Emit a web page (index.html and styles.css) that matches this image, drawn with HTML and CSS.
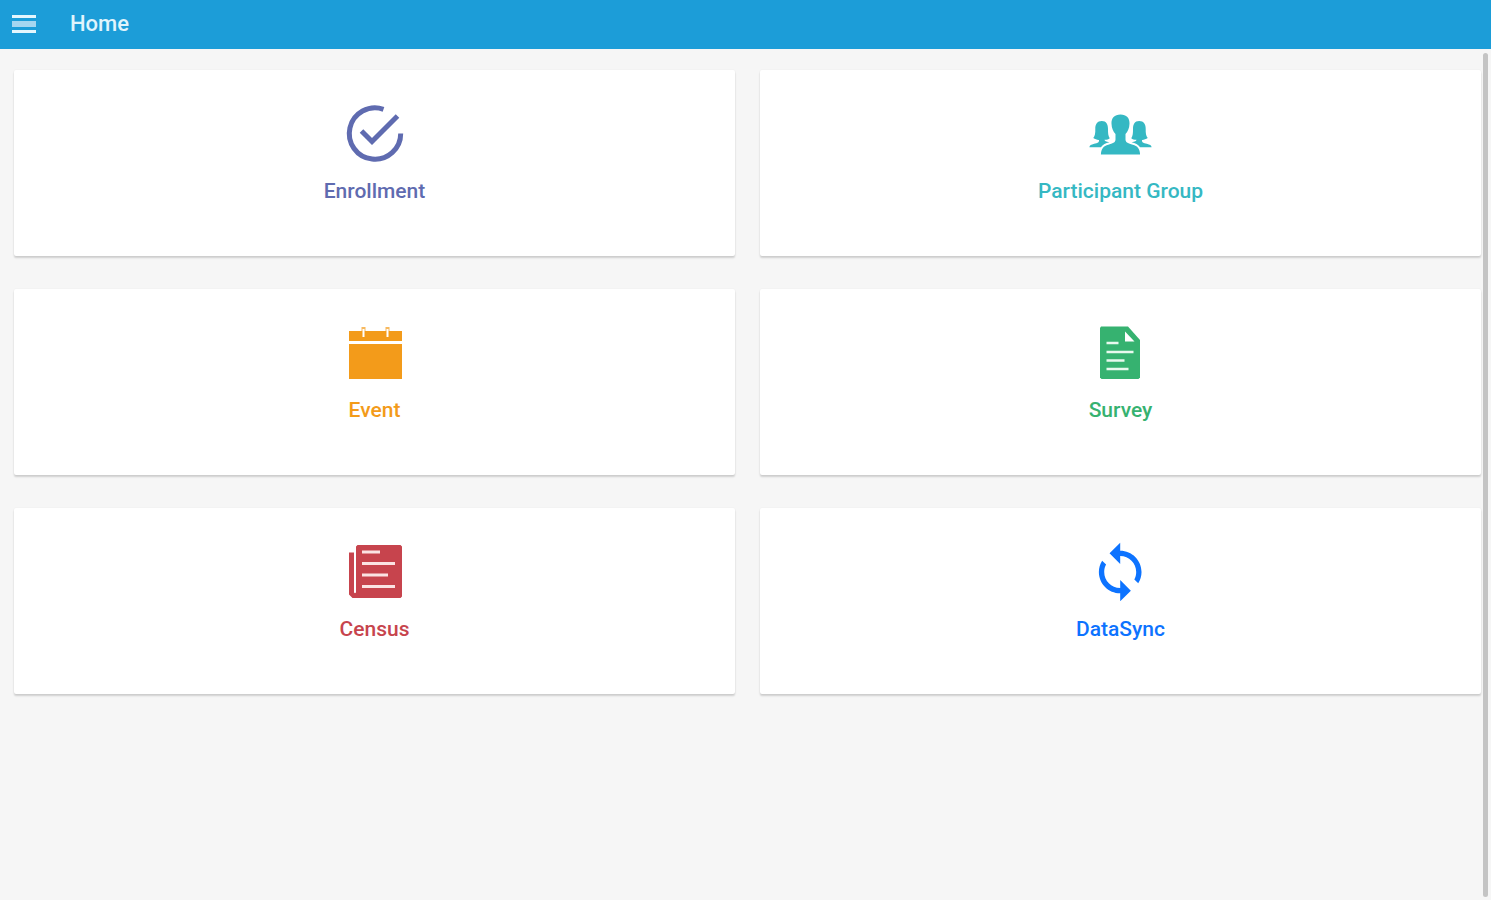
FILE: index.html
```html
<!DOCTYPE html>
<html lang="en">
<head>
<meta charset="utf-8">
<meta name="viewport" content="width=device-width, initial-scale=1">
<title>Home</title>
<link rel="stylesheet" href="styles.css">
</head>
<body>
<header class="toolbar">
  <button class="menu-button" type="button" aria-label="Menu">
    <svg class="menu-icon" viewBox="0 0 24 18" aria-hidden="true"><path d="M0 0h24v3H0zM0 15h24v3H0z" fill="#e4f6fd"/><path d="M0 6h24v6H0z" fill="#a5d6f0"/></svg>
  </button>
  <h1 class="title">Home</h1>
</header>
<main class="content">
  <nav class="grid">
    <a class="card enrollment" href="#">
      <svg class="icon" viewBox="0 0 64 64" fill="none" stroke="currentColor" stroke-width="5" aria-hidden="true"><path d="M40.500 7.300A25.700 25.700 0 1 0 57.700 31.500"/><path d="M18.500 29L29 39.500L54.500 14"/></svg>
      <span class="label">Enrollment</span>
    </a>
    <a class="card participants" href="#">
      <svg class="icon" viewBox="0 0 64 64" fill="currentColor" aria-hidden="true"><path d="M31.500 12.500c6 0 9.300 3.500 9 9.300-.2 4.500-1.600 7.700-4 10.200v5.500c0 3 3 4 7.200 5.200 4.800 1.400 7.200 3.700 7.400 9.800H11.900c.2-6.100 2.600-8.400 7.400-9.800 4.200-1.200 7.200-2.200 7.200-5.200V32c-2.400-2.500-3.800-5.700-4-10.200-.3-5.800 3-9.300 9-9.300z"/><path id="side" d="M12.800 19c-4.600 0-6.600 3.300-6.500 8 .1 4-.3 6.800-2 9.100 1.700 1.300 4 1.900 5.700 1.800.3 2.600-1.500 3-4.800 3.900-3.200.9-4.600 1.600-4.800 3.400h11.500c1.800-2.800 4.800-3.900 8.500-5-3.300-.4-5-1.200-4.900-2.400 2 .1 4-.4 5.200-1.500-1.600-2.500-1.700-5.200-1.700-9.300 0-4.700-1.600-8-6.200-8z"/><use href="#side" transform="translate(63 0) scale(-1 1)"/></svg>
      <span class="label">Participant Group</span>
    </a>
    <a class="card event" href="#">
      <svg class="icon" viewBox="0 0 64 64" fill="currentColor" aria-hidden="true"><path d="M6 10h53v10H6zM6 23h53v35H6z"/><path d="M18.500 6h4v8h-4zM42.500 6h4v8h-4z" opacity=".7"/><path d="M19.500 8h2v8h-2zM43.500 8h2v8h-2z" fill="#fff"/></svg>
      <span class="label">Event</span>
    </a>
    <a class="card survey" href="#">
      <svg class="icon" viewBox="0 0 64 64" aria-hidden="true"><path d="M12 5.500h27l12 13.500v37.500L49.500 58H12.500L11 56.500V7z" fill="currentColor"/><path d="M36 10.500l9.500 10H36z" fill="#fff"/><path d="M17.500 22h12M17.500 31h27M17.500 39.500h18M17.500 48h22" stroke="#e8f9ee" stroke-width="2.500"/></svg>
      <span class="label">Survey</span>
    </a>
    <a class="card census" href="#">
      <svg class="icon" viewBox="0 0 64 64" aria-hidden="true"><path d="M14.500 5H57.500L59 6.500v50L57.500 58H9.500L6 54.500v-42h5V52c0 1.500 2 1.500 2 0V6.500z" fill="currentColor"/><path d="M19 12h18M19 23.500h33M19 35h26M19 46.500h33" stroke="#fbe3e3" stroke-width="2.800"/></svg>
      <span class="label">Census</span>
    </a>
    <a class="card datasync" href="#">
      <svg class="icon" viewBox="0.300 0 24 24" fill="currentColor" aria-hidden="true"><path d="M12 4V1L8 5l4 4V6c3.310 0 6 2.690 6 6 0 1.010-.25 1.970-.7 2.800l1.460 1.460C19.540 15.030 20 13.570 20 12c0-4.420-3.580-8-8-8zm0 14c-3.310 0-6-2.690-6-6 0-1.010.25-1.970.7-2.800L5.240 7.740C4.460 8.970 4 10.430 4 12c0 4.420 3.580 8 8 8v3l4-4-4-4v3z"/></svg>
      <span class="label">DataSync</span>
    </a>
  </nav>
  <div class="scroll-thumb" aria-hidden="true"></div>
</main>
</body>
</html>
```
FILE: styles.css
```css
* {
  box-sizing: border-box;
}

body {
  margin: 0;
  min-height: 100vh;
  display: flex;
  flex-direction: column;
  background: #f6f6f6;
  font-family: Roboto, "Liberation Sans", sans-serif;
}

.toolbar {
  display: flex;
  align-items: center;
  gap: 34px;
  height: 49px;
  padding: 0 12px 2px;
  background: #1c9dd8;
}

.menu-button {
  display: flex;
  padding: 0;
  border: 0;
  background: none;
  cursor: pointer;
}

.menu-icon {
  width: 24px;
  height: 18px;
}

.title {
  margin: 0;
  color: #e0f4fc;
  font-size: 22px;
  line-height: 24px;
  font-weight: 500;
}

.content {
  position: relative;
  flex: 1;
  padding: 21px 10px 24px 14px;
}

.grid {
  display: grid;
  grid-template-columns: 1fr 1fr;
  gap: 33px 25px;
}

.card {
  display: flex;
  flex-direction: column;
  align-items: center;
  gap: 13px;
  padding: 32px 16px 53px;
  border-radius: 2px;
  background: #fff;
  box-shadow: 0 2px 2px rgba(0, 0, 0, 0.16), 0 0 2px rgba(0, 0, 0, 0.06);
  text-decoration: none;
}

.icon {
  width: 64px;
  height: 64px;
}

.label {
  font-size: 21px;
  line-height: 24px;
  font-weight: 500;
}

.enrollment { color: #5f6bb0; }
.participants { color: #35b8c3; }
.event { color: #f39b1a; }
.survey { color: #36b270; }
.census { color: #c7444d; }
.datasync { color: #0d73ff; }

.scroll-thumb {
  position: absolute;
  top: 4px;
  right: 3px;
  bottom: 3px;
  width: 5px;
  border-radius: 3px;
  background: #c4c4c4;
}
```
